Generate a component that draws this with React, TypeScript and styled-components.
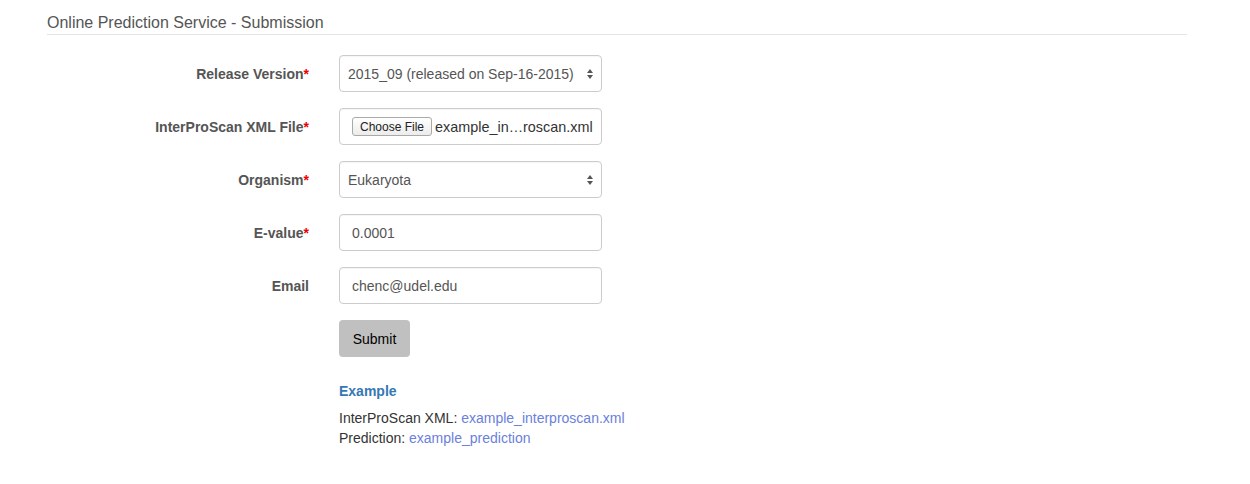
import React from 'react';
import styled, {createGlobalStyle} from 'styled-components';

const GlobalStyle = createGlobalStyle`
  html, body {
    margin: 0;
    padding: 0;
    background: #fff;
  }
  body {
    font-family: "Liberation Sans", Arial, Helvetica, sans-serif;
    font-size: 14px;
    color: #333;
  }
`;

const Page = styled.div`
  width: 1140px;
  padding: 12px 0 20px 47px;
`;

const Title = styled.h4`
  margin: 0;
  font-size: 16px;
  font-weight: normal;
  line-height: 22px;
  color: #555;
  border-bottom: 1px solid #e5e5e5;
`;

const Form = styled.form`
  display: grid;
  grid-template-columns: 262px 263px;
  column-gap: 30px;
  row-gap: 16px;
  margin-top: 20px;
  align-items: center;
`;

const Label = styled.label`
  text-align: right;
  font-weight: bold;
  color: #555;
  font-size: 14px;
`;

const Required = styled.span`
  color: #e00;
`;

const Field = styled.div<{$pad?: number}>`
  position: relative;
  box-sizing: border-box;
  height: 37px;
  border: 1px solid #ccc;
  border-radius: 4px;
  display: flex;
  align-items: center;
  padding: 0 ${({$pad}) => $pad ?? 12}px;
  font-size: 14px;
  color: #555;
  background: #fff;
  white-space: nowrap;
  box-shadow: inset 0 1px 1px rgba(0, 0, 0, 0.04);
`;

const Arrows = styled.svg`
  position: absolute;
  right: 6px;
  top: 50%;
  margin-top: -6px;
`;

const FileButton = styled.span`
  flex-shrink: 0;
  display: inline-flex;
  align-items: center;
  height: 17px;
  padding: 0 7px;
  margin-right: 3px;
  border: 1px solid #a9a9a9;
  border-radius: 3px;
  background: linear-gradient(#fff, #ececec);
  font-size: 12px;
  color: #222;
`;

const FileName = styled.span`
  color: #333;
  font-size: 14.4px;
`;

const Spacer = styled.div``;

const SubmitButton = styled.button`
  justify-self: start;
  width: 71px;
  height: 37px;
  border: none;
  border-radius: 4px;
  background: #c0c0c0;
  font-family: inherit;
  font-size: 14px;
  color: #000;
`;

const ExampleBlock = styled.div`
  margin-top: 8px;
  line-height: 20px;
  color: #333;
  white-space: nowrap;
`;

const ExampleTitle = styled.div`
  font-weight: bold;
  color: #3478b4;
  margin-bottom: 7px;
`;

const ExampleLink = styled.a`
  color: #6b7fdc;
  text-decoration: none;
`;

const SelectArrows = () => (
  <Arrows width="10" height="12" viewBox="0 0 10 12">
    <path d="M2 5 L5 1 L8 5 Z" fill="#555" />
    <path d="M2 7 L5 11 L8 7 Z" fill="#555" />
  </Arrows>
);

export default function App() {
  return (
    <>
      <GlobalStyle />
      <Page>
        <Title>Online Prediction Service - Submission</Title>
        <Form onSubmit={e => e.preventDefault()}>
          <Label>
            Release Version<Required>*</Required>
          </Label>
          <Field $pad={8}>
            2015_09 (released on Sep-16-2015)
            <SelectArrows />
          </Field>

          <Label>
            InterProScan XML File<Required>*</Required>
          </Label>
          <Field>
            <FileButton>Choose File</FileButton>
            <FileName>example_in…roscan.xml</FileName>
          </Field>

          <Label>
            Organism<Required>*</Required>
          </Label>
          <Field $pad={8}>
            Eukaryota
            <SelectArrows />
          </Field>

          <Label>
            E-value<Required>*</Required>
          </Label>
          <Field>0.0001</Field>

          <Label>Email</Label>
          <Field>chenc@udel.edu</Field>

          <Spacer />
          <SubmitButton type="submit">Submit</SubmitButton>

          <Spacer />
          <ExampleBlock>
            <ExampleTitle>Example</ExampleTitle>
            <div>
              InterProScan XML:{' '}
              <ExampleLink href="#">example_interproscan.xml</ExampleLink>
            </div>
            <div>
              Prediction: <ExampleLink href="#">example_prediction</ExampleLink>
            </div>
          </ExampleBlock>
        </Form>
      </Page>
    </>
  );
}
